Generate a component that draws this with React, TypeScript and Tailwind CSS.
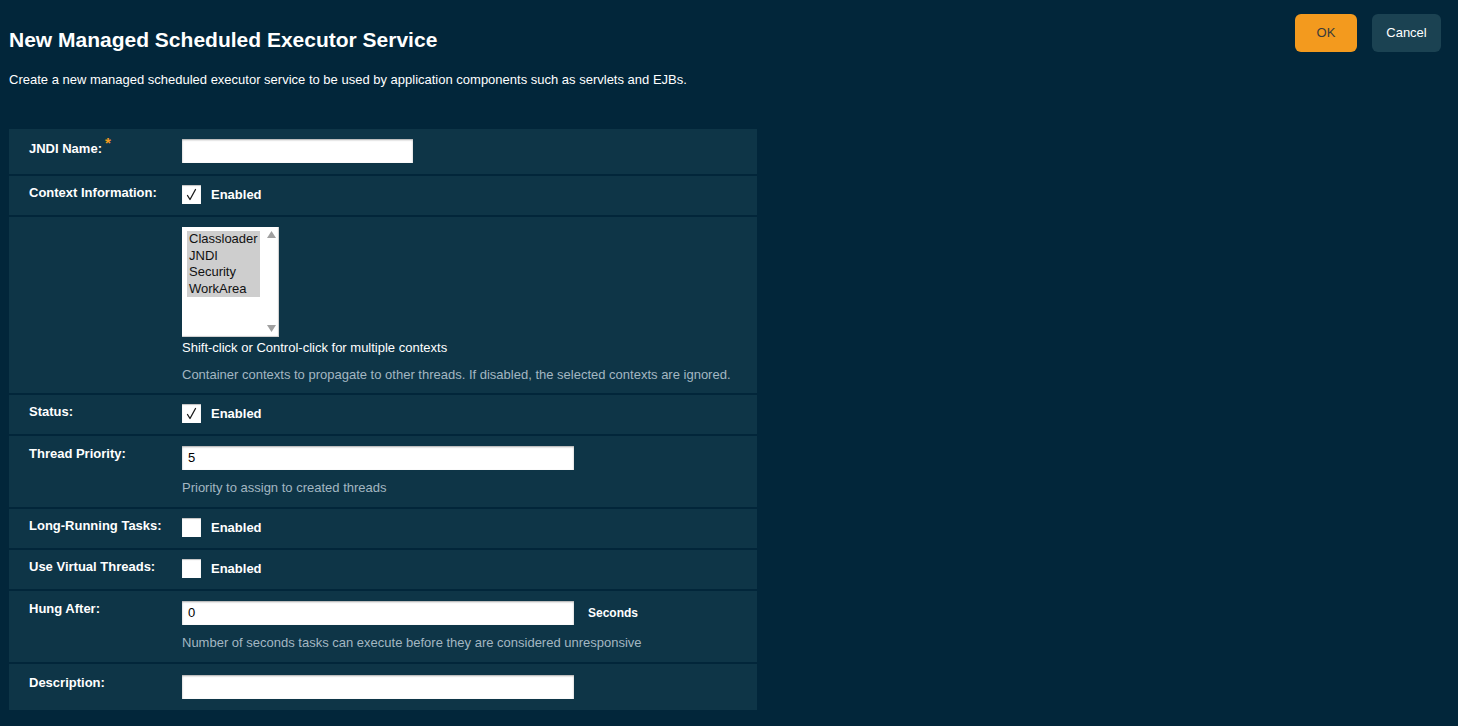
import React from "react";

const font = { fontFamily: '"Liberation Sans", Arial, sans-serif' };

function Check({ checked }: { checked: boolean }) {
  return (
    <div className="w-[19px] h-[19px] bg-white shadow-[inset_0_1px_1px_rgba(0,0,0,0.25)] flex items-center justify-center">
      {checked && (
        <svg width="19" height="19" viewBox="0 0 19 19">
          <path d="M5.5 10.5 L8 14.5 L13.5 4.5" fill="none" stroke="#1a1a1a" strokeWidth="1.3" strokeLinecap="round" strokeLinejoin="round" />
        </svg>
      )}
    </div>
  );
}

function TextBox({ value, wide = true }: { value?: string; wide?: boolean }) {
  return (
    <div
      className={`${wide ? "w-[392px]" : "w-[231px]"} h-[24px] bg-white shadow-[inset_0_1px_2px_rgba(0,0,0,0.35)] px-[6px] flex items-center text-[13px] text-black`}
    >
      {value}
    </div>
  );
}

function Row({ label, children }: { label?: string; children: React.ReactNode }) {
  return (
    <div className="bg-[#0e3547] flex pl-[20px] pt-[9px] pb-[11px]">
      <div className="w-[153px] shrink-0 text-[13px] font-bold text-white leading-4">{label}</div>
      <div className="flex-1">{children}</div>
    </div>
  );
}

function CheckRow({ label, checked }: { label: string; checked: boolean }) {
  return (
    <Row label={label}>
      <div className="h-[19px] flex items-center gap-[10px]">
        <Check checked={checked} />
        <span className="text-[13px] leading-4 font-bold text-white">Enabled</span>
      </div>
    </Row>
  );
}

function Help({ children }: { children: React.ReactNode }) {
  return <div className="mt-[10px] text-[13px] leading-4 text-[#a3b7c2]">{children}</div>;
}

export default function App() {
  const contexts = ["Classloader", "JNDI", "Security", "WorkArea"];
  return (
    <div className="min-h-[726px] bg-[#02263a] px-[9px] pb-[16px]" style={font}>
      <div className="flex justify-between items-start">
        <h1 className="mt-[28px] text-[21px] leading-6 font-bold text-white">New Managed Scheduled Executor Service</h1>
        <div className="mt-[14px] mr-[8px] flex gap-[15px]">
          <button className="w-[62px] h-[38px] rounded-[6px] bg-[#f39a1e] text-[13px] text-[#3a3a3a]">OK</button>
          <button className="w-[69px] h-[38px] rounded-[6px] bg-[#1b4252] text-[13px] text-white">Cancel</button>
        </div>
      </div>
      <p className="mt-[20px] text-[13px] leading-4 text-white">
        Create a new managed scheduled executor service to be used by application components such as servlets and EJBs.
      </p>

      <div className="mt-[41px] w-[748px] flex flex-col gap-[2px]">
        <div className="bg-[#0e3547] flex pl-[20px] pt-[10px] pb-[11px]">
          <div className="w-[153px] shrink-0 pt-[1px] text-[13px] font-bold text-white leading-4">
            JNDI Name:<span className="text-[#f39c1f] text-[15px] ml-[3px] relative -top-[5px]">*</span>
          </div>
          <TextBox wide={false} />
        </div>

        <CheckRow label="Context Information:" checked />

        <div className="bg-[#0e3547] flex pl-[20px] pt-[10px] pb-[10px]">
          <div className="w-[153px] shrink-0" />
          <div>
            <div className="w-[97px] h-[110px] bg-white shadow-[inset_-1px_-1px_1px_rgba(0,0,0,0.2)] flex">
              <div className="pl-[5px] pt-[4px]">
                <div className="bg-[#cecece]">
                  {contexts.map((c) => (
                    <div key={c} className="h-[16.5px] leading-[16.5px] px-[2px] text-[13px] text-[#111]">
                      {c}
                    </div>
                  ))}
                </div>
              </div>
              <div className="flex-1 flex flex-col items-end pr-[2px] justify-between pt-[3px] pb-[4px]">
                <svg width="11" height="9" viewBox="0 0 11 9">
                  <path d="M5.5 1 L10 8 L1 8 Z" fill="#a0a0a0" />
                </svg>
                <svg width="11" height="9" viewBox="0 0 11 9">
                  <path d="M1 1 L10 1 L5.5 8 Z" fill="#a0a0a0" />
                </svg>
              </div>
            </div>
            <div className="mt-[3px] text-[13px] leading-4 text-white">Shift-click or Control-click for multiple contexts</div>
            <div className="mt-[11px] text-[13px] leading-4 text-[#a3b7c2]">
              Container contexts to propagate to other threads. If disabled, the selected contexts are ignored.
            </div>
          </div>
        </div>

        <CheckRow label="Status:" checked />

        <div className="bg-[#0e3547] flex pl-[20px] pt-[10px] pb-[11px]">
          <div className="w-[153px] shrink-0 text-[13px] font-bold text-white leading-4">Thread Priority:</div>
          <div>
            <TextBox value="5" />
            <Help>Priority to assign to created threads</Help>
          </div>
        </div>

        <CheckRow label="Long-Running Tasks:" checked={false} />
        <CheckRow label="Use Virtual Threads:" checked={false} />

        <div className="bg-[#0e3547] flex pl-[20px] pt-[10px] pb-[11px]">
          <div className="w-[153px] shrink-0 text-[13px] font-bold text-white leading-4">Hung After:</div>
          <div>
            <div className="flex items-center gap-[14px]">
              <TextBox value="0" />
              <span className="text-[12px] font-bold text-white">Seconds</span>
            </div>
            <Help>Number of seconds tasks can execute before they are considered unresponsive</Help>
          </div>
        </div>

        <div className="bg-[#0e3547] flex pl-[20px] pt-[11px] pb-[11px]">
          <div className="w-[153px] shrink-0 text-[13px] font-bold text-white leading-4">Description:</div>
          <TextBox />
        </div>
      </div>
    </div>
  );
}
